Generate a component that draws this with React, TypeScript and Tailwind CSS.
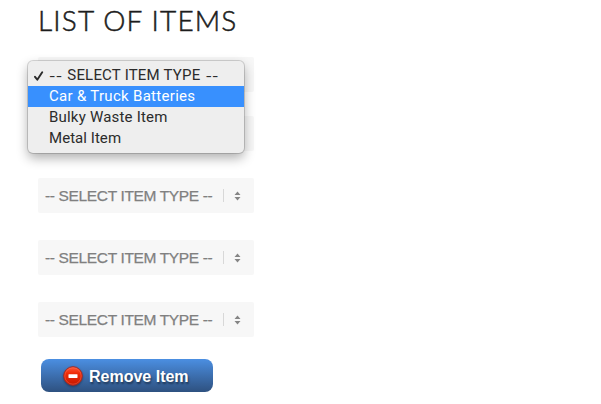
import clsx from 'clsx';

const options = [
    { label: 'SELECT ITEM TYPE', placeholder: true, spacing: 'tracking-[0.2px]' },
    { label: 'Car & Truck Batteries', active: true, spacing: 'tracking-[0.3px]' },
    { label: 'Bulky Waste Item', spacing: 'tracking-[0.2px]' },
    { label: 'Metal Item', spacing: 'tracking-[0.05px]' },
];

function ItemSelect() {
    return (
        <div className="flex h-[35px] w-[216px] items-center rounded-[2px] bg-[#f7f7f7] pl-[7px]">
            <span className="w-[178px] pt-px whitespace-nowrap font-['Liberation_Sans',Arial,sans-serif] text-[15.5px] tracking-[-0.35px] text-[#808080] [-webkit-text-stroke:0.25px_#808080]">
                -- SELECT ITEM TYPE --
            </span>
            <span className="h-[13px] w-px bg-[#d8d8d8]" />
            <svg className="ml-[10px]" width="7" height="10" viewBox="0 0 7 10" fill="#858585">
                <path d="M3.5 0.5 6.5 4h-6zM3.5 9.5 6.5 6h-6z" />
            </svg>
        </div>
    );
}

// the open menu lies over these two, only their edges show
function CoveredSelect() {
    return <div className="h-[35px] w-[216px] rounded-[2px] bg-[#f7f7f7]" />;
}

function Dashes() {
    return <span className="font-[Inter,sans-serif] text-[14px]">--</span>;
}

function ItemMenu() {
    return (
        <div className="absolute top-[4px] left-[-10px] h-[92px] w-[216px] rounded-[5px] bg-[#eeeeee] py-1 shadow-[0_0_0_1px_rgba(0,0,0,0.15),0_5px_12px_rgba(0,0,0,0.32)]">
            {options.map((o) => (
                <div
                    key={o.label}
                    className={clsx(
                        "flex h-[21px] items-center font-[Roboto,sans-serif] text-[15px] whitespace-nowrap",
                        o.active ? 'bg-[#3890fe] text-white' : 'text-[#2b2b2b]',
                    )}
                >
                    <span className="flex w-[21px] pl-[6px]">
                        {o.placeholder && (
                            <svg width="10" height="10" viewBox="0 0 10 10" fill="none" stroke="#2b2b2b" strokeWidth="1.9" strokeLinecap="round" strokeLinejoin="round">
                                <path d="M1 5.8 3.3 8.7 8.2 1.2" />
                            </svg>
                        )}
                    </span>
                    {o.placeholder ? (
                        <span className={clsx('flex items-center gap-[5px]', o.spacing)}>
                            <Dashes />
                            {o.label}
                            <Dashes />
                        </span>
                    ) : (
                        <span className={o.spacing}>{o.label}</span>
                    )}
                </div>
            ))}
        </div>
    );
}

function RemoveIcon() {
    return (
        <svg className="drop-shadow-[0_1px_1px_rgba(0,0,0,0.35)]" width="20" height="20" viewBox="0 0 20 20">
            <defs>
                <linearGradient id="red" x1="0" y1="0" x2="0" y2="1">
                    <stop offset="0" stopColor="#ff5a3c" />
                    <stop offset="0.35" stopColor="#f02c08" />
                    <stop offset="1" stopColor="#c41800" />
                </linearGradient>
            </defs>
            <circle cx="10" cy="10" r="9.3" fill="url(#red)" stroke="#a32a25" />
            <circle cx="10" cy="10" r="8.2" fill="none" stroke="#ff7a60" strokeOpacity="0.5" strokeWidth="0.8" />
            <rect x="5.5" y="8.3" width="9" height="3.6" rx="0.4" fill="#fff" />
        </svg>
    );
}

export default function App() {
    return (
        <main className="h-[404px] w-[601px] overflow-hidden bg-white pl-[38px]">
            <h1 className="h-[57px] pt-[2px] font-[Lato,sans-serif] text-[28px] leading-[36px] font-light tracking-[1.15px] whitespace-nowrap text-[#1c1c1c] [-webkit-text-stroke:0.5px_#1c1c1c]">
                LIST OF ITEMS
            </h1>
            <div className="relative">
                <div className="flex flex-col gap-[27px]">
                    <div className="flex flex-col gap-6">
                        <CoveredSelect />
                        <CoveredSelect />
                    </div>
                    <ItemSelect />
                    <ItemSelect />
                    <ItemSelect />
                </div>
                <ItemMenu />
            </div>
            <button className="mt-[22px] ml-[3px] flex h-[33px] w-[172px] items-center rounded-[8px] bg-linear-to-b from-[#4b8fe2] to-[#2e5180] pl-[22px]">
                <RemoveIcon />
                <span className="ml-[6px] pt-[2px] font-['Liberation_Sans',Arial,sans-serif] text-[16px] font-bold whitespace-nowrap text-white [text-shadow:1px_2px_2px_rgba(0,0,0,0.45)]">
                    Remove Item
                </span>
            </button>
        </main>
    );
}
